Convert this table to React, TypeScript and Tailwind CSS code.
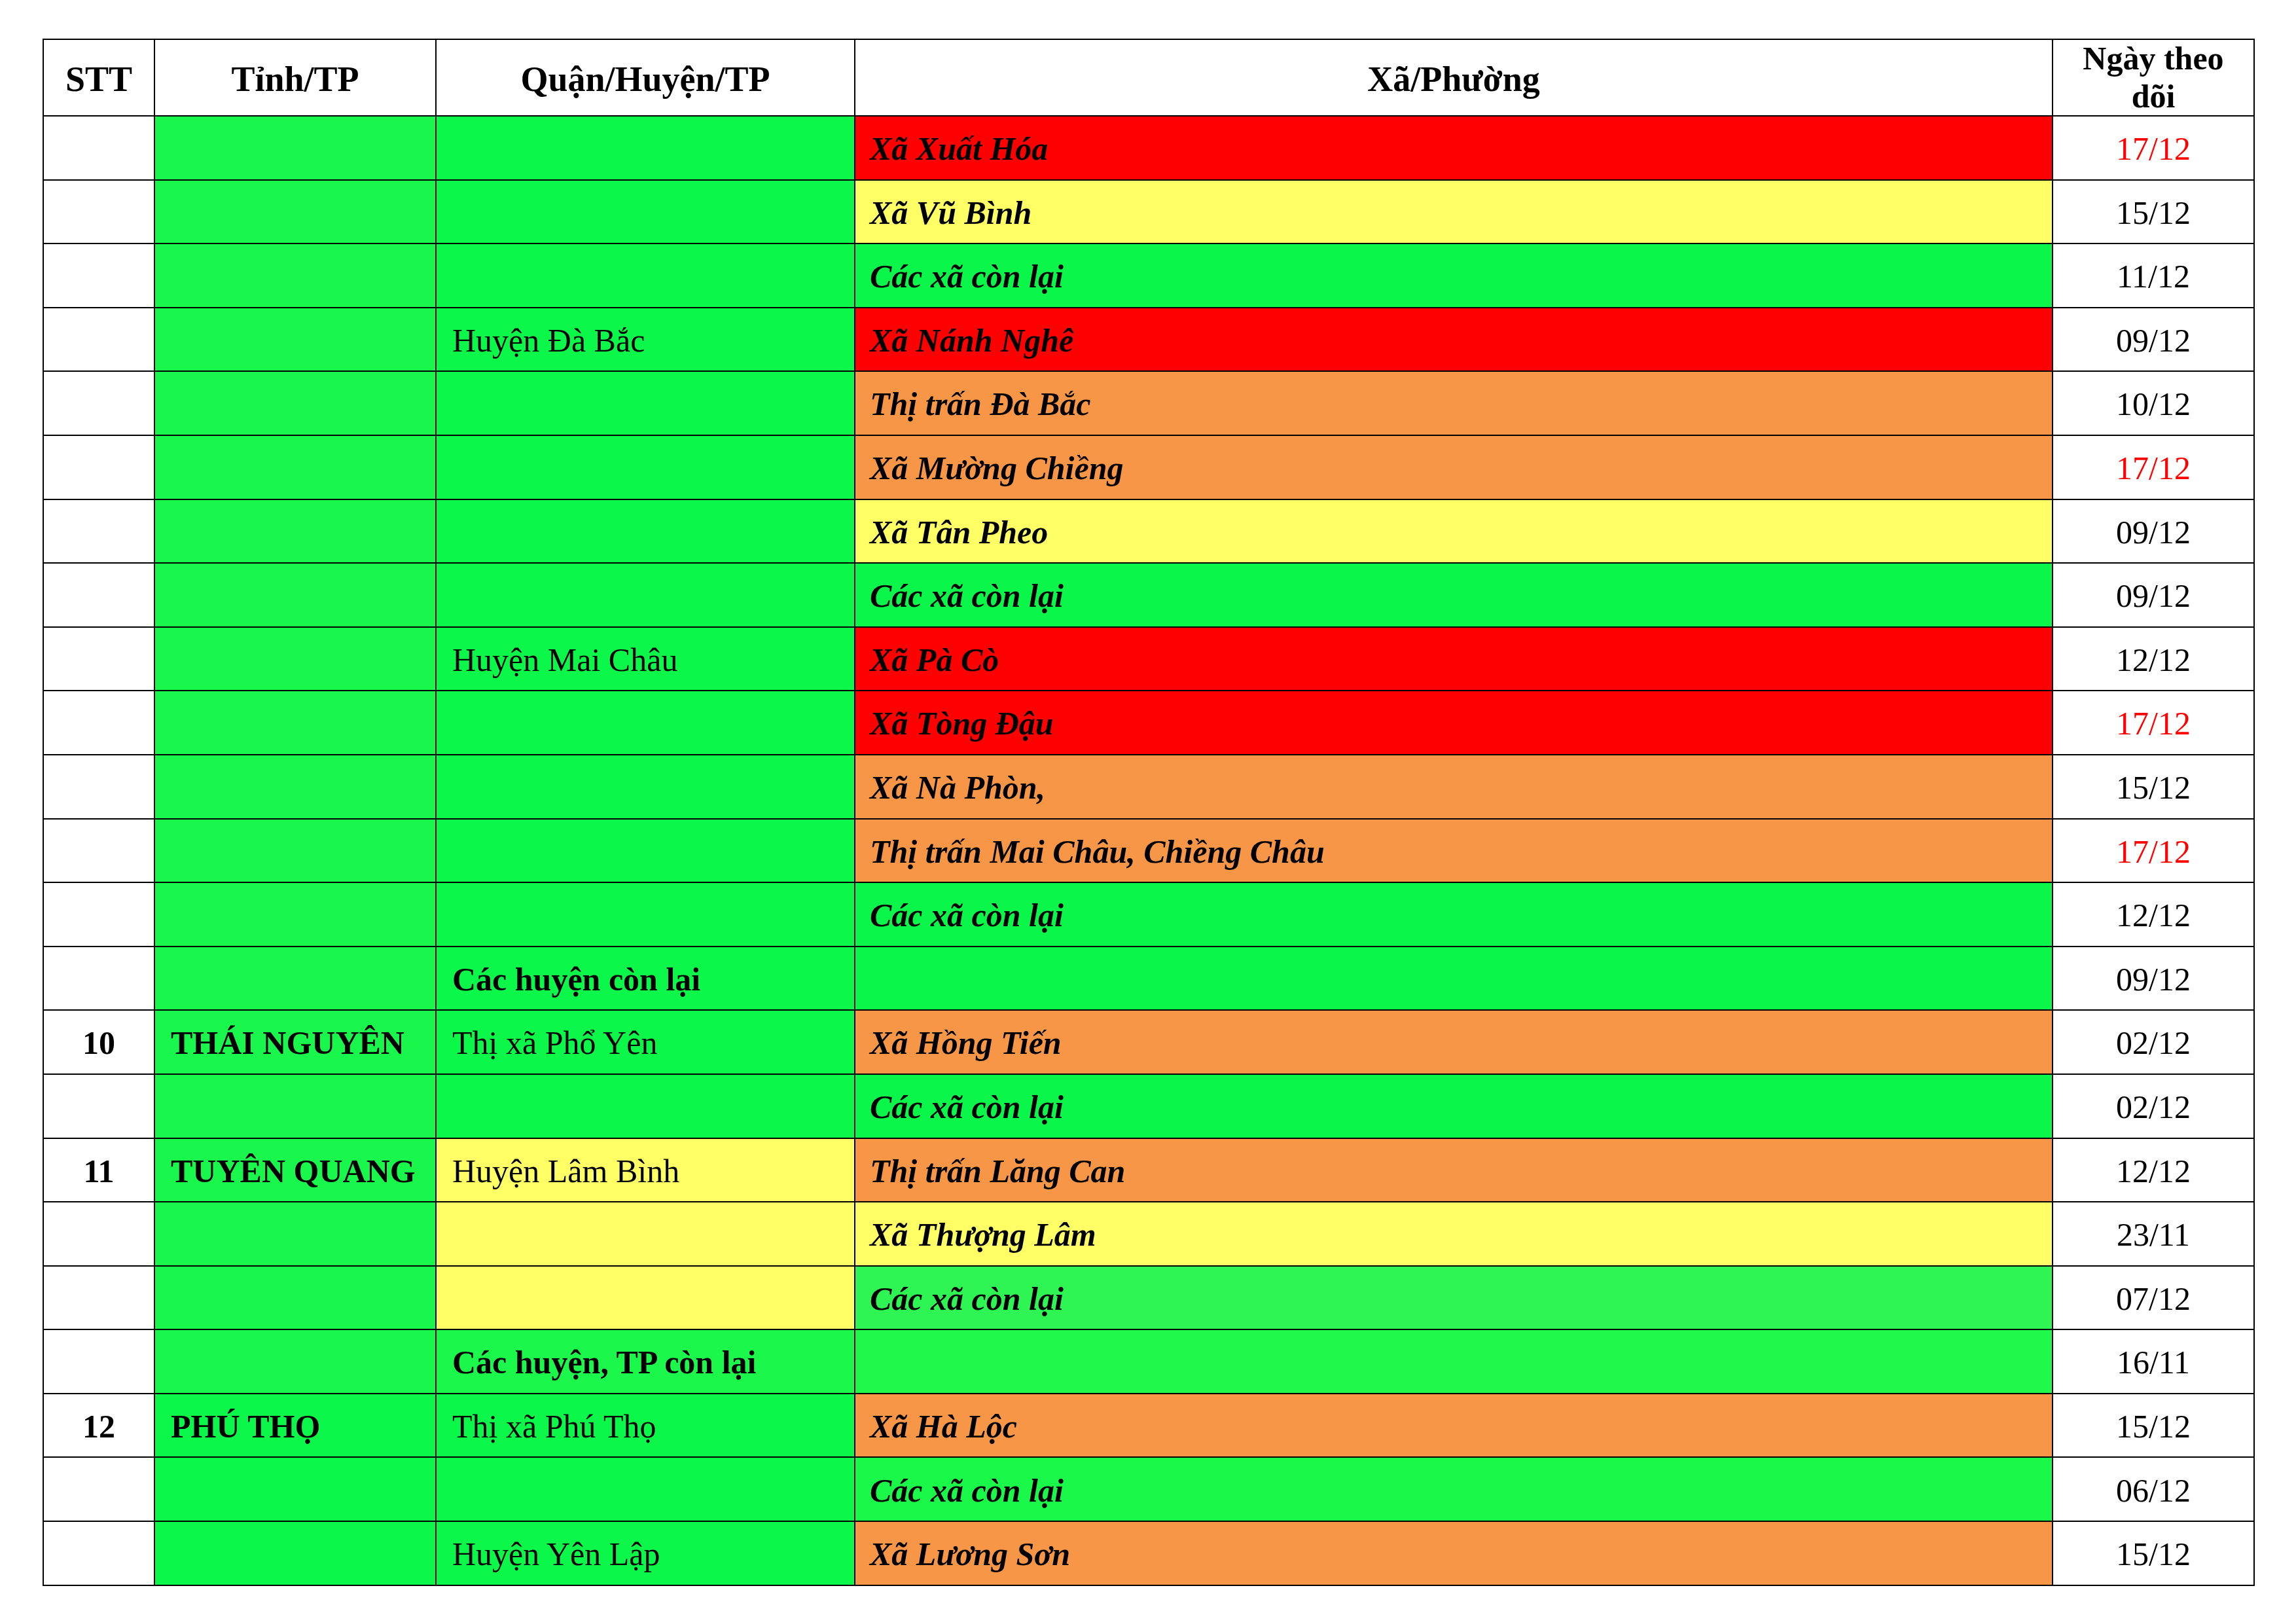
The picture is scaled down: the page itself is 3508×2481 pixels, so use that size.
import React from "react";

type Row = {
  stt?: string;
  tinh?: string;
  tinhBg: string;
  quan?: string;
  quanBold?: boolean;
  quanBg: string;
  xa: string;
  xaBg: string;
  date: string;
  red?: boolean;
};

const rows: Row[] = [
  { tinhBg: "bg-[#1af74c]", quanBg: "bg-[#0bf749]", xa: "Xã Xuất Hóa", xaBg: "bg-[#ff0000]", date: "17/12", red: true },
  { tinhBg: "bg-[#1af74c]", quanBg: "bg-[#0bf749]", xa: "Xã Vũ Bình", xaBg: "bg-[#ffff66]", date: "15/12" },
  { tinhBg: "bg-[#1af74c]", quanBg: "bg-[#0bf749]", xa: "Các xã còn lại", xaBg: "bg-[#0bf64a]", date: "11/12" },
  { tinhBg: "bg-[#1af74c]", quan: "Huyện Đà Bắc", quanBg: "bg-[#0bf749]", xa: "Xã Nánh Nghê", xaBg: "bg-[#ff0000]", date: "09/12" },
  { tinhBg: "bg-[#1af74c]", quanBg: "bg-[#0bf749]", xa: "Thị trấn Đà Bắc", xaBg: "bg-[#f79646]", date: "10/12" },
  { tinhBg: "bg-[#1af74c]", quanBg: "bg-[#0bf749]", xa: "Xã Mường Chiềng", xaBg: "bg-[#f79646]", date: "17/12", red: true },
  { tinhBg: "bg-[#1af74c]", quanBg: "bg-[#0bf749]", xa: "Xã Tân Pheo", xaBg: "bg-[#ffff66]", date: "09/12" },
  { tinhBg: "bg-[#1af74c]", quanBg: "bg-[#0bf749]", xa: "Các xã còn lại", xaBg: "bg-[#0bf64a]", date: "09/12" },
  { tinhBg: "bg-[#1af74c]", quan: "Huyện Mai Châu", quanBg: "bg-[#0bf749]", xa: "Xã Pà Cò", xaBg: "bg-[#ff0000]", date: "12/12" },
  { tinhBg: "bg-[#1af74c]", quanBg: "bg-[#0bf749]", xa: "Xã Tòng Đậu", xaBg: "bg-[#ff0000]", date: "17/12", red: true },
  { tinhBg: "bg-[#1af74c]", quanBg: "bg-[#0bf749]", xa: "Xã Nà Phòn,", xaBg: "bg-[#f79646]", date: "15/12" },
  { tinhBg: "bg-[#1af74c]", quanBg: "bg-[#0bf749]", xa: "Thị trấn Mai Châu, Chiềng Châu", xaBg: "bg-[#f79646]", date: "17/12", red: true },
  { tinhBg: "bg-[#1af74c]", quanBg: "bg-[#0bf749]", xa: "Các xã còn lại", xaBg: "bg-[#0bf64a]", date: "12/12" },
  { tinhBg: "bg-[#1af74c]", quan: "Các huyện còn lại", quanBold: true, quanBg: "bg-[#0bf749]", xa: "", xaBg: "bg-[#0bf64a]", date: "09/12" },
  { stt: "10", tinh: "THÁI NGUYÊN", tinhBg: "bg-[#1af74c]", quan: "Thị xã Phổ Yên", quanBg: "bg-[#0bf749]", xa: "Xã Hồng Tiến", xaBg: "bg-[#f79646]", date: "02/12" },
  { tinhBg: "bg-[#1af74c]", quanBg: "bg-[#0bf749]", xa: "Các xã còn lại", xaBg: "bg-[#0bf64a]", date: "02/12" },
  { stt: "11", tinh: "TUYÊN QUANG", tinhBg: "bg-[#1af74c]", quan: "Huyện Lâm Bình", quanBg: "bg-[#ffff66]", xa: "Thị trấn Lăng Can", xaBg: "bg-[#f79646]", date: "12/12" },
  { tinhBg: "bg-[#1af74c]", quanBg: "bg-[#ffff66]", xa: "Xã Thượng Lâm", xaBg: "bg-[#ffff66]", date: "23/11" },
  { tinhBg: "bg-[#1af74c]", quanBg: "bg-[#ffff66]", xa: "Các xã còn lại", xaBg: "bg-[#2ef553]", date: "07/12" },
  { tinhBg: "bg-[#1af74c]", quan: "Các huyện, TP còn lại", quanBold: true, quanBg: "bg-[#1cf74b]", xa: "", xaBg: "bg-[#20f84b]", date: "16/11" },
  { stt: "12", tinh: "PHÚ THỌ", tinhBg: "bg-[#0bf749]", quan: "Thị xã Phú Thọ", quanBg: "bg-[#0bf749]", xa: "Xã Hà Lộc", xaBg: "bg-[#f79646]", date: "15/12" },
  { tinhBg: "bg-[#0bf749]", quanBg: "bg-[#0bf749]", xa: "Các xã còn lại", xaBg: "bg-[#1af94a]", date: "06/12" },
  { tinhBg: "bg-[#0bf749]", quan: "Huyện Yên Lập", quanBg: "bg-[#0bf749]", xa: "Xã Lương Sơn", xaBg: "bg-[#f79646]", date: "15/12" },
];

const cell = "border-2 border-black align-middle pt-[4px] pb-0";

export default function App() {
  return (
    <div className="w-[3508px] h-[2481px] bg-white pt-[59px] pl-[65px] font-['Liberation_Serif',serif] text-black">
      <table className="table-fixed border-collapse w-[3378px] border-2 border-black">
        <colgroup>
          <col className="w-[170px]" />
          <col className="w-[430px]" />
          <col className="w-[640px]" />
          <col className="w-[1830px]" />
          <col className="w-[308px]" />
        </colgroup>
        <thead>
          <tr className="h-[117px]">
            <th className={`${cell} px-0 text-center text-[54px] font-bold leading-[62px]`}>STT</th>
            <th className={`${cell} px-0 text-center text-[54px] font-bold leading-[62px]`}>Tỉnh/TP</th>
            <th className={`${cell} px-0 text-center text-[54px] font-bold leading-[62px]`}>Quận/Huyện/TP</th>
            <th className={`${cell} px-0 text-center text-[54px] font-bold leading-[62px]`}>Xã/Phường</th>
            <th className={`border-2 border-black align-middle p-0 text-center text-[50px] font-bold leading-[57.5px]`}>
              Ngày theo
              <br />
              dõi
            </th>
          </tr>
        </thead>
        <tbody>
          {rows.map((r, i) => (
            <tr key={i} className="h-[97.6px]">
              <td className={`${cell} px-0 bg-white text-center text-[50px] font-bold leading-[57.5px]`}>{r.stt ?? ""}</td>
              <td className={`${cell} ${r.tinhBg} pl-[24px] pr-0 text-[50px] font-bold leading-[57.5px] whitespace-nowrap`}>{r.tinh ?? ""}</td>
              <td
                className={`${cell} ${r.quanBg} pl-[24px] pr-0 text-[50px] leading-[57.5px] whitespace-nowrap ${
                  r.quanBold ? "font-bold" : "font-normal"
                }`}
              >
                {r.quan ?? ""}
              </td>
              <td className={`${cell} ${r.xaBg} pl-[22px] pr-0 text-[50px] font-bold italic leading-[57.5px] whitespace-nowrap`}>{r.xa}</td>
              <td
                className={`${cell} px-0 bg-white text-center text-[50px] leading-[57.5px] ${
                  r.red ? "text-[#ff0000]" : "text-black"
                }`}
              >
                {r.date}
              </td>
            </tr>
          ))}
        </tbody>
      </table>
    </div>
  );
}
